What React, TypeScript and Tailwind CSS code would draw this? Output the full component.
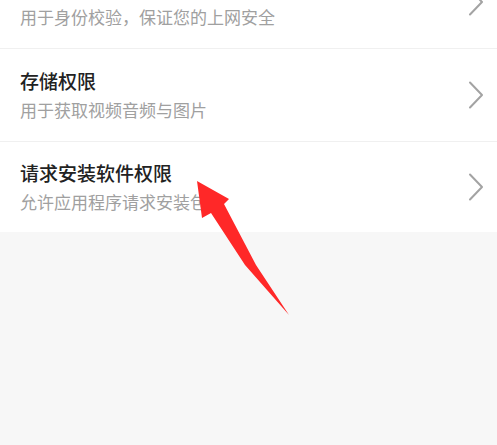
import React from "react";

type Item = { title: string; desc: string; height: string; pad: string };

const items: Item[] = [
  { title: "设备信息权限", desc: "用于身份校验，保证您的上网安全", height: "h-[93px]", pad: "border-b" },
  { title: "存储权限", desc: "用于获取视频音频与图片", height: "h-[93px]", pad: "border-b" },
  { title: "请求安装软件权限", desc: "允许应用程序请求安装包", height: "h-[90px]", pad: "" },
];

function Chevron() {
  return (
    <svg width="16" height="28" viewBox="0 0 16 28" fill="none" className="shrink-0">
      <polyline
        points="2,1.5 14,14 2,26.5"
        stroke="#a3a3a3"
        strokeWidth="2"
        strokeLinecap="round"
        strokeLinejoin="round"
      />
    </svg>
  );
}

function Arrow() {
  return (
    <svg
      className="pointer-events-none absolute left-0 top-0"
      width="497"
      height="445"
      viewBox="0 0 497 445"
    >
      <polygon
        points="197,181 229,199 224,204 256,265 289,315 245,265 211,213 202,218"
        fill="#ff2828"
      />
    </svg>
  );
}

export default function App() {
  return (
    <div
      className="relative h-[445px] w-[497px] overflow-hidden bg-[#f7f7f7]"
      style={{ fontFamily: '"Noto Sans CJK SC", "Noto Sans", sans-serif' }}
    >
      <div className="-mt-[44px] bg-white">
        {items.map((it) => (
          <div
            key={it.title}
            className={`flex items-center justify-between pl-5 pr-[13px] ${it.height} ${it.pad} border-[#f0f0f0]`}
          >
            <div className="flex flex-col">
              <span className="text-[19px] font-medium leading-[26px] text-[#222222]">
                {it.title}
              </span>
              <span className="mt-[4px] text-[17px] leading-[24px] text-[#a0a0a0]">
                {it.desc}
              </span>
            </div>
            <Chevron />
          </div>
        ))}
      </div>
      <Arrow />
    </div>
  );
}
